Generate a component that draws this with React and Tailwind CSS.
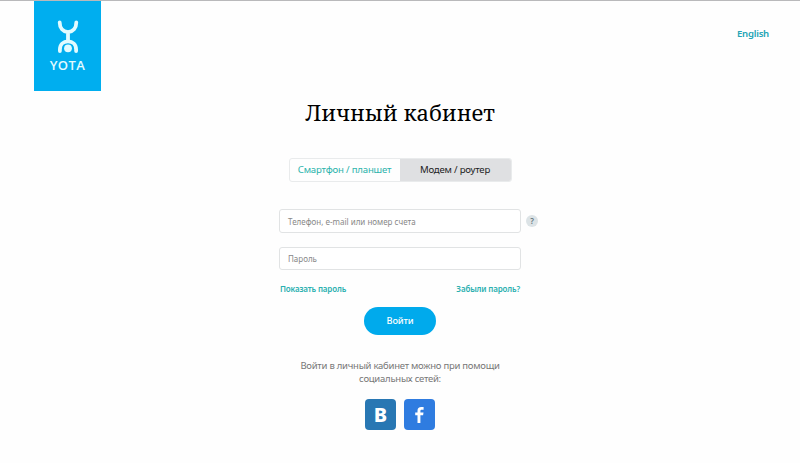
import React from "react";

const sans = "font-['Noto_Sans',sans-serif]";

export default function App() {
  return (
    <div className={`h-[463px] w-[800px] overflow-hidden border-t border-[#b9b9bb] bg-[#fefefe] ${sans}`}>
      <header className="flex h-[90px] justify-between pl-[34px] pr-[31px]">
        <a className="flex h-[90px] w-[67px] flex-col items-center bg-[#00aeef] text-[#e2fbff]">
          <svg className="mt-[18px] h-[36px] w-[22px] shrink-0" viewBox="0 0 22 36" fill="none" stroke="currentColor" strokeWidth="3.8" strokeLinecap="round">
            <path d="M2.7 3.5C2.7 9 6 12.6 11 13.2C16 12.6 19.3 9 19.3 3.5M11 13.2V22" />
            <path d="M2.9 32V30.5C2.9 25.4 6.3 22.4 11 22.4S19.1 25.4 19.1 30.5V32" />
            <circle cx="11" cy="29.3" r="3.9" fill="currentColor" stroke="none" />
          </svg>
          <span className="font-['Open_Sans',sans-serif] text-[13px] leading-[20px] font-semibold tracking-[0.4px] whitespace-nowrap">YOTA</span>
        </a>
        <a className="mt-[25px] h-4 text-[9.6px] leading-4 font-semibold tracking-[-0.25px] whitespace-nowrap text-[#23a5b5]">English</a>
      </header>
      <main className="flex flex-col items-center">
        <h1 className="mt-[5px] h-8 font-['Noto_Serif','DejaVu_Serif',serif] text-[22px] leading-8 whitespace-nowrap text-black">Личный кабинет</h1>
        <div className="mt-[30px] flex h-[24px] w-[223px] overflow-hidden rounded-[3px] border border-[#e9ebec] text-[9.6px] leading-[22px] tracking-[-0.2px]">
          <button className="w-[110px] whitespace-nowrap text-[#2bb3ac]">Смартфон / планшет</button>
          <button className="flex-1 whitespace-nowrap bg-[#dfe0e2] text-[#222]">Модем / роутер</button>
        </div>
        <form className="mt-[27px] w-[242px] text-[8px]">
          <div className="flex h-[24px] items-center">
            <div className="h-[24px] w-[242px] shrink-0 rounded-[3px] border border-[#e1e3e4] bg-white pl-2 leading-[23px] whitespace-nowrap text-[#888]">Телефон, e-mail или номер счета</div>
            <span className="ml-[5px] flex size-3 shrink-0 items-center justify-center rounded-full bg-[#dce3e6] text-[8px] leading-3 font-semibold text-[#64757d]">?</span>
          </div>
          <div className="mt-[14px] h-[23px] rounded-[3px] border border-[#e1e3e4] bg-white pl-2 leading-[22px] whitespace-nowrap text-[#888]">Пароль</div>
          <div className="mt-[12px] flex h-[15px] justify-between text-[8px] leading-[14px] font-semibold tracking-[-0.15px] whitespace-nowrap text-[#2bb0b0]">
            <a className="pl-px">Показать пароль</a>
            <a className="pr-px">Забыли пароль?</a>
          </div>
        </form>
        <button className="mt-[10px] h-[28px] w-[72px] rounded-full bg-[#00aaec] text-[9.2px] leading-[28px] font-medium tracking-[-0.15px] text-white">Войти</button>
        <p className="mt-[25px] text-center text-[9.5px] leading-[12.5px] tracking-[-0.25px] whitespace-nowrap text-[#777]">Войти в личный кабинет можно при помощи<br />социальных сетей:</p>
        <div className="mt-[14px] flex gap-[8px]">
          <a className="flex size-[31px] items-center justify-center rounded-[4px] bg-[#2877b3] text-[20px] font-extrabold text-white">B</a>
          <a className="flex size-[31px] items-center justify-center rounded-[4px] bg-[#2f7ce0] text-white">
            <svg className="h-[18px] w-[11px]" viewBox="0 0 11 18" fill="currentColor">
              <path d="M3.5 17V9.2H1.2V6.6H3.5V4.8C3.5 2.2 4.9 1 7.2 1H9.6V3.7H8C6.8 3.7 6.4 4.2 6.4 5.1V6.6H9.5L9.1 9.2H6.4V17Z" />
            </svg>
          </a>
        </div>
      </main>
    </div>
  );
}
